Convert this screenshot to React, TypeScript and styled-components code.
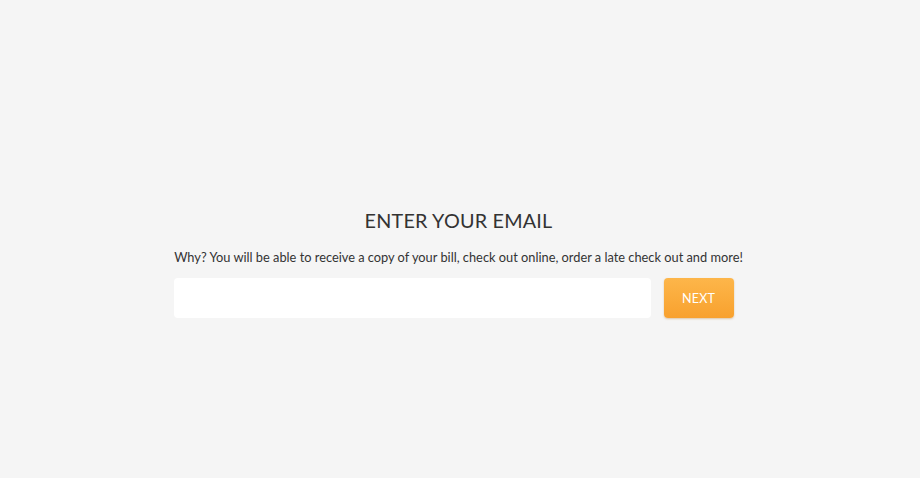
import React from "react";
import styled, { createGlobalStyle } from "styled-components";

const Global = createGlobalStyle`
  html, body { margin: 0; padding: 0; background: #f5f5f5; }
  body { font-family: Lato, "Open Sans", sans-serif; }
`;

const Page = styled.div`
  width: 917px;
  height: 478px;
  box-sizing: border-box;
  padding-top: 205px;
  background: #f5f5f5;
`;

const Content = styled.div`
  width: 570px;
  margin: 0 auto;
  display: flex;
  flex-direction: column;
  text-align: center;
`;

const Title = styled.h1`
  margin: 0;
  font-family: Lato, sans-serif;
  font-weight: 400;
  font-size: 19.8px;
  line-height: 30px;
  color: #333;
  letter-spacing: 0.2px;
`;

const Subtitle = styled.p`
  margin: 12px 0 0;
  font-size: 12.8px;
  line-height: 20px;
  color: #333;
  white-space: nowrap;
`;

const Form = styled.div`
  margin-top: 11px;
  display: flex;
  gap: 13px;
`;

const Input = styled.input`
  width: 477px;
  height: 40px;
  box-sizing: border-box;
  border: none;
  border-radius: 4px;
  background: #fff;
  outline: none;
  padding: 0 12px;
  font-size: 14px;
`;

const Button = styled.button`
  width: 70px;
  height: 40px;
  border: none;
  border-radius: 4px;
  background: linear-gradient(#fdb64a, #f8a12e);
  box-shadow: 0 1px 2px rgba(180, 110, 20, 0.35);
  color: #fff;
  font-family: Lato, sans-serif;
  font-size: 12.5px;
  letter-spacing: 0.2px;
  cursor: pointer;
`;

export default function App() {
  return (
    <>
      <Global />
      <Page>
        <Content>
          <Title>ENTER YOUR EMAIL</Title>
          <Subtitle>
            Why? You will be able to receive a copy of your bill, check out online, order a late check out and more!
          </Subtitle>
          <Form>
            <Input type="email" />
            <Button>NEXT</Button>
          </Form>
        </Content>
      </Page>
    </>
  );
}
